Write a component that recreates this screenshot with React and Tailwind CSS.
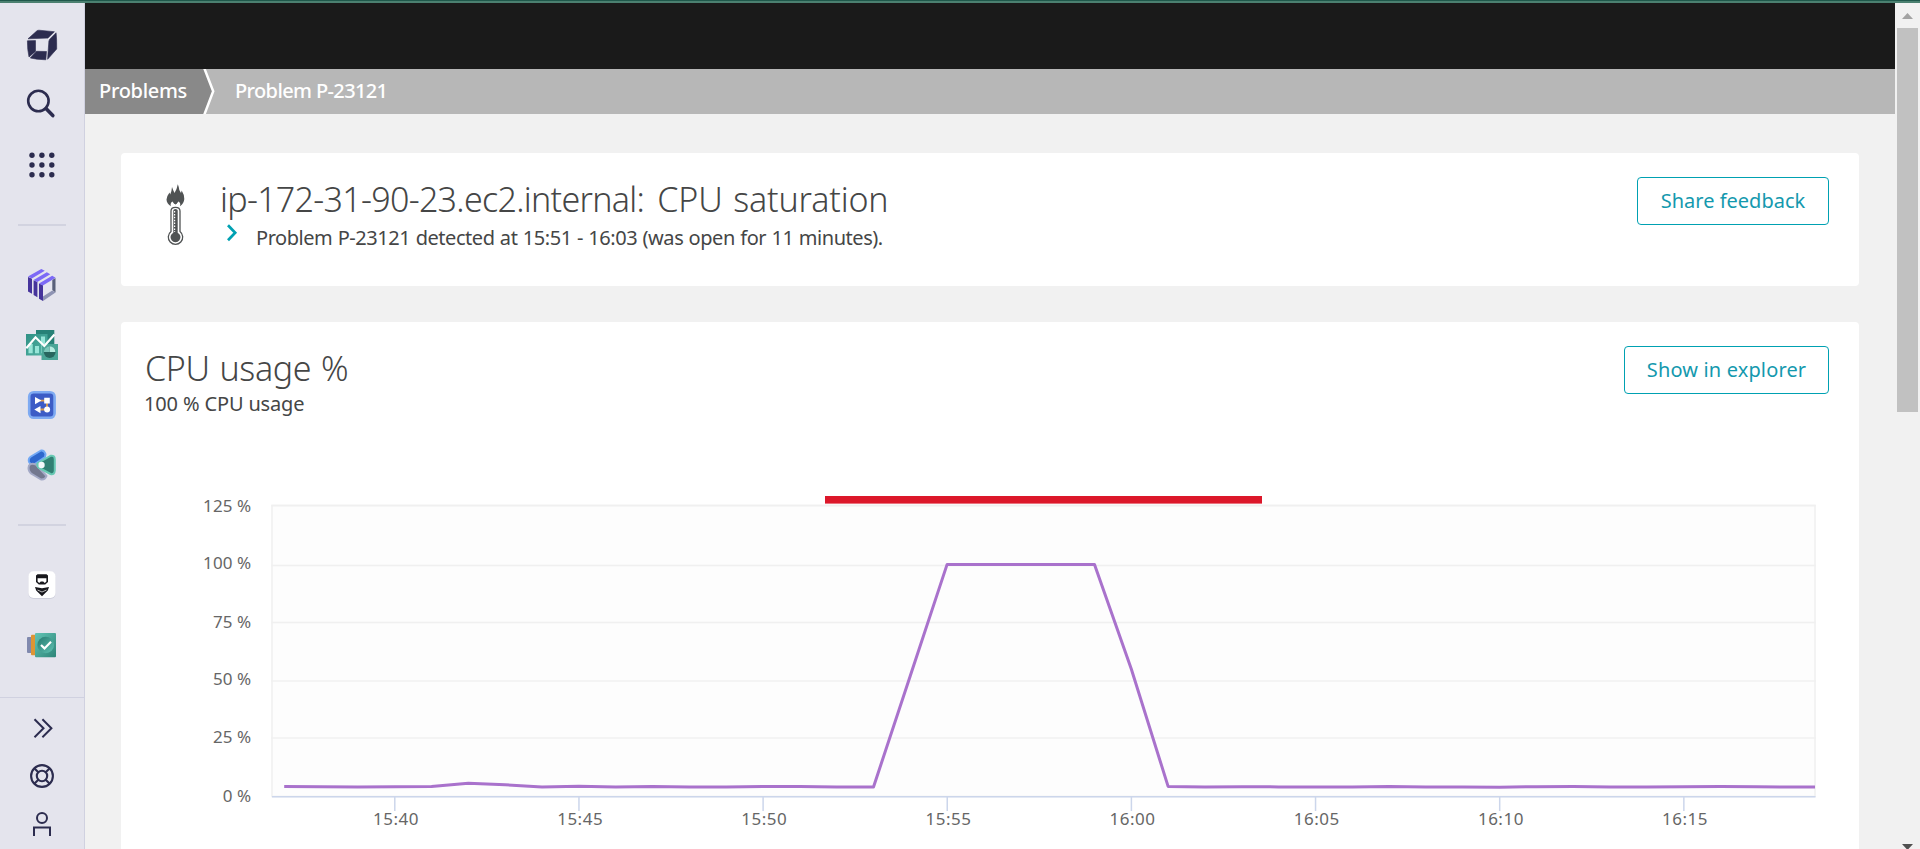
import React from "react";

const INK = "#2c2c4f";

function Glyph({ y, h = 60, label, children }) {
  return (
    <svg className="block w-[60px] shrink-0" height={h} viewBox={`12 ${y} 60 ${h}`} fill="none" aria-label={label}>
      {children}
    </svg>
  );
}

function Logo() {
  return (
    <Glyph y={15} label="Home">
      <g fill={INK} stroke={INK} strokeWidth="0.6" strokeLinejoin="round">
        <path d="M28 38.8 37.2 30.6Q38 30.2 39 30.2L54.4 31.7 48 38.1Z" />
        <path d="M49.7 39.2 56.1 32.8Q56.8 39 56.7 49L47.6 59.3Q48.2 50 48.9 41Z" />
        <path d="M27.4 40.8 35.5 40.6 35.5 51.4 29 57Q27.3 50 27.4 40.8Z" />
        <path d="M30.3 58 36.4 51.3 46.5 51.5 45.8 59.8 37 59.2Z" />
      </g>
    </Glyph>
  );
}

function Search() {
  return (
    <Glyph y={75} label="Search">
      <circle cx="38.4" cy="101" r="10.2" stroke={INK} strokeWidth="2.6" />
      <path d="M46 108.6 52.8 115.6" stroke={INK} strokeWidth="3.6" strokeLinecap="round" />
    </Glyph>
  );
}

function Apps() {
  return (
    <Glyph y={135} label="Apps">
      {[155.2, 165, 174.8].map((cy) => [32, 41.9, 51.8].map((cx) => <circle key={`${cx}-${cy}`} cx={cx} cy={cy} r="2.7" fill={INK} />))}
    </Glyph>
  );
}

function Panels() {
  return (
    <Glyph y={255} label="Clouds">
      <path d="M43 286 52.5 281V290.5L43 295.5Z" fill="#e6e6f0" />
      <path d="M52.3 280 55.5 278V292.5L52.3 290Z" fill="#59607a" />
      <path d="M43 301V296.5L52.3 290.5 55.5 292.5Z" fill="#8e93b3" />
      <path d="M28 277 32 278.8V293.8L28 291.5ZM33.6 280.2 37.4 282V297.2L33.6 295ZM39 283.5 43 285.2V301L39 298.8Z" fill="#46349c" />
      <path d="M28 276.6 41.3 269 44.8 270.8 31.8 278.6ZM33.6 280 46.8 272.3 50.3 274.2 37.3 281.9ZM39 283.4 52.2 275.8 55.6 277.7 42.8 285.4Z" fill="#7c69f6" />
    </Glyph>
  );
}

function Dashboards() {
  return (
    <Glyph y={315} label="Dashboards">
      <defs>
        <linearGradient id="dashA" x1="0" y1="0" x2="1" y2="1">
          <stop stopColor="#2f9085" />
          <stop offset="1" stopColor="#55b5a6" />
        </linearGradient>
      </defs>
      <rect x="36" y="330" width="18.3" height="18" fill="#278177" />
      <rect x="26" y="334" width="21.5" height="21.5" fill="url(#dashA)" />
      <path d="M28.5 344h4.2v9.3h-4.2ZM35 346h4v7.3h-4ZM41 336.5h4v16.8h-4Z" fill="#97e5d8" />
      <rect x="41.5" y="344" width="16.5" height="16" fill="#4aa597" />
      <circle cx="49.7" cy="352.2" r="5.8" fill="#27665f" />
      <path d="M49.5 352V346.2A5.8 5.8 0 0 1 55.4 352Z" fill="#b5ece1" />
      <path d="M49.5 352H43.9A5.8 5.8 0 0 1 49.5 346.2Z" fill="#7cc8bb" />
      <path d="M26.3 348.3 35.5 337.3 44.3 346 54.5 334.5" stroke="#fff" strokeWidth="2.2" />
    </Glyph>
  );
}

function Workflows() {
  return (
    <Glyph y={375} label="Workflows">
      <rect x="29.2" y="392.2" width="25.4" height="25.6" rx="4.5" fill="#3c5cc6" stroke="#7eaaf2" strokeWidth="2.6" />
      <path d="M40 400.6H47V409.5H39" stroke="#d99b49" strokeWidth="1.8" />
      <path d="M35 397V404.2L41.5 400.6ZM44.2 397.8H49.8V403.4H44.2ZM34.3 409.6 40.5 406V413.2Z" fill="#fff" />
      <circle cx="47.1" cy="409.6" r="3" fill="#fff" />
    </Glyph>
  );
}

function Discover() {
  return (
    <Glyph y={435} label="Discovery">
      <g strokeLinejoin="round" strokeWidth="2">
        <path d="M29 462Q28 458.500 31 456.500L41 450.500Q44 449.800 45.500 454L45 457 34 464.500Q30 464.500 29 462Z" fill="#2e67cd" stroke="#71a8f5" />
        <path d="M29 465.500Q27.500 470 31 473.500L41 479.500Q45 480 46.500 476L36 464.500Q31 462.800 29 465.500Z" fill="#73788f" stroke="#a3a9c6" />
        <path d="M38 463 50.500 455.800Q54.800 455 54.800 459.500V470.500Q54.500 475 50.500 474L38.500 467.500Q36.200 465 38 463Z" fill="#317f73" stroke="#68c9b4" />
      </g>
      <circle cx="41.5" cy="465" r="3.2" fill="#f3f8fb" />
    </Glyph>
  );
}

function Ninja() {
  return (
    <Glyph y={555} label="Ninja">
      <rect x="28.5" y="572" width="27" height="27" rx="5" fill="#cfd0dc" />
      <rect x="28.5" y="571.3" width="27" height="26.7" rx="5" fill="#fff" />
      <path d="M37.5 574.3H46.5L48 575.5V582L45.2 584.6H38.8L36 582V575.5Z" fill="#17171c" />
      <path d="M37.6 578.3H46.4V581.5L44.8 582.9 43.2 581.5H40.8L39.2 582.9 37.6 581.5Z" fill="#fff" />
      <path d="M35 587 42 588.2 49 587 47.8 590.5 42 596.3 36.2 590.5Z" fill="#17171c" />
      <path d="M37.5 590 42 592 46.5 590" stroke="#fff" strokeWidth="0.7" />
    </Glyph>
  );
}

function Guardian() {
  return (
    <Glyph y={615} label="Guardian">
      <defs>
        <linearGradient id="gA" x1="0" y1="0" x2="1" y2="1">
          <stop stopColor="#62c4b5" />
          <stop offset="1" stopColor="#2d8578" />
        </linearGradient>
        <linearGradient id="gB" x1="0" y1="0" x2="1" y2="1">
          <stop stopColor="#267a70" />
          <stop offset="1" stopColor="#5fc2b2" />
        </linearGradient>
      </defs>
      <rect x="27" y="637" width="6" height="16" rx="1" fill="#8089ae" />
      <rect x="31" y="634.7" width="6" height="20.5" rx="1" fill="#dd9534" />
      <rect x="35" y="633" width="21" height="24.3" rx="1" fill="url(#gA)" />
      <circle cx="45.7" cy="645" r="8.3" fill="url(#gB)" />
      <path d="M41 645 44.5 648.4 51 641.8" stroke="#fff" strokeWidth="2.2" />
    </Glyph>
  );
}

function Footer() {
  return (
    <>
      <Glyph y={704} h={48} label="Expand">
        <path d="M34.5 719.2 43.5 728.2 34.5 737.2M42.4 719.2 51.4 728.2 42.4 737.2" stroke={INK} strokeWidth="2" />
      </Glyph>
      <Glyph y={752} h={48} label="Help">
        <g stroke={INK} strokeWidth="2.1">
          <circle cx="42" cy="776" r="10.9" />
          <circle cx="42" cy="776" r="5.2" />
          <path d="M34.3 768.3 38.3 772.3M49.7 768.3 45.7 772.3M34.3 783.7 38.3 779.7M49.7 783.7 45.7 779.7" />
        </g>
      </Glyph>
      <Glyph y={800} h={48} label="Account">
        <g stroke={INK} strokeWidth="2">
          <circle cx="42" cy="818" r="5" />
          <path d="M34 836V827.5H50V836" />
        </g>
      </Glyph>
    </>
  );
}

function Sidebar() {
  return (
    <nav className="flex w-[85px] shrink-0 flex-col items-center border-r border-[#d0d1e0] bg-[#e4e4ed] pt-3">
      <Logo />
      <Search />
      <Apps />
      <div className="my-[29px] h-0.5 w-12 shrink-0 bg-[#d2d3e0]" />
      <Panels />
      <Dashboards />
      <Workflows />
      <Discover />
      <div className="my-[29px] h-0.5 w-12 shrink-0 bg-[#d2d3e0]" />
      <Ninja />
      <Guardian />
      <div className="mt-[22px] flex w-full flex-col items-center border-t border-[#d0d1e0] pt-1.5">
        <Footer />
      </div>
    </nav>
  );
}

function Breadcrumbs() {
  return (
    <div className="flex h-[45px] shrink-0 items-center bg-[#b7b7b7] text-xl font-medium text-white">
      <div className="flex h-full w-[118px] items-center bg-[#898989] pb-0.5 pl-3.5 tracking-[-0.3px]">Problems</div>
      <svg className="block h-[45px] w-3" viewBox="0 0 12 45" fill="none">
        <path d="M0 0H1.5L10 22.5 1.5 45H0Z" fill="#898989" />
        <path d="M1.2 -1 10.2 22.3 1.2 46" stroke="#fff" strokeWidth="2.5" />
      </svg>
      <div className="pb-0.5 pl-5 tracking-[-0.62px]">Problem P-23121</div>
    </div>
  );
}

function Thermometer() {
  return (
    <svg className="block h-[64px] w-[20px]" viewBox="165 183 20 64" fill="none">
      <path d="M172 187Q173 190 174.5 193Q177 189 177.8 184.2Q179 187 179.3 190L181 193 181.7 190.5Q184.500 195 184.3 199Q184 203.5 180 206.2Q181 202.5 178.3 201.5Q176.5 204.2 175.3 204.2Q174 204 172.5 201.5Q170 203 170.8 206.2Q166.7 203.5 166.5 199.5Q166.5 196.5 169.5 192.5L170.2 194.5Q171.8 191 172 187Z" fill="#505354" />
      <path d="M173.2 198.5H178Q178.8 202 175.6 204.5Q172.5 202 173.2 198.5Z" fill="#505354" />
      <path d="M171 211Q171 207.3 175.5 207.3Q180 207.3 180 211V231.5A7.2 7.2 0 1 1 171 231.5Z" stroke="#505354" strokeWidth="1.3" />
      <path d="M173.3 210.5Q173.3 209 175.5 209Q177.7 209 177.7 210.5V232.7A5 5 0 1 1 173.3 232.7Z" fill="#505354" />
      <path d="M174.6 211V232" stroke="#fff" strokeWidth="1.2" strokeDasharray="1.5 1.4" />
    </svg>
  );
}

function OutlineButton({ className, children }) {
  return (
    <button className={`flex h-12 shrink-0 items-center justify-center rounded-[4px] border border-[#00a1b2] bg-white text-xl text-[#1499ae] ${className}`}>
      {children}
    </button>
  );
}

function ProblemCard() {
  return (
    <section className="flex h-[133px] shrink-0 items-start rounded-[4px] bg-white pl-11 pr-[30px]">
      <div className="pt-[30px]">
        <Thermometer />
      </div>
      <div className="ml-[33px] flex-1 pt-[26px]">
        <h1 className="pl-0.5 text-[34px] font-light leading-10 tracking-[-0.7px] whitespace-nowrap">
          ip-172-31-90-23.ec2.internal:{" "}
          <span className="pl-[5px] tracking-[-0.15px] [word-spacing:2px]">CPU saturation</span>
        </h1>
        <div className="flex pt-[7px]">
          <svg className="-mt-[5px] block h-6 w-[38px]" viewBox="0 0 38 24" fill="none">
            <path d="M10 4.2 17.2 11.8 10 19.3" stroke="#00a1b2" strokeWidth="2.7" />
          </svg>
          <p className="text-xl leading-6 tracking-[-0.45px] whitespace-nowrap [word-spacing:0.6px]">
            Problem P-23121 detected at 15:51 - 16:03 (was open for 11 minutes).
          </p>
        </div>
      </div>
      <OutlineButton className="mt-6 w-[192px]">Share feedback</OutlineButton>
    </section>
  );
}

const START = 284.2;
const STEP = 36.83;
const levels = [786.6, 786.8, 786.9, 786.8, 786.4, 783.3, 784.8, 787.1, 786.2, 787, 786.5, 786.9, 786.9, 786.6, 786.6, 786.9, 787, 675.7, 564.4, 564.4, 564.4, 564.4, 564.4, 669, 786.4, 787, 786.7, 786.9, 786.9, 786.9, 786.4, 786.9, 786.9, 787.2, 786.7, 786.4, 786.9, 787, 786.8, 786.5, 786.8, 787, 786.9];
const points = levels.map((y, i) => `${Math.min(START + i * STEP, 1815).toFixed(1)},${y}`).join(" ");
const rows = [
  ["125 %", 505.5, 511.8],
  ["100 %", 565.5, 568.8],
  ["75 %", 622.5, 628],
  ["50 %", 681, 685],
  ["25 %", 738, 743],
  ["0 %", 0, 802],
];
const times = ["15:40", "15:45", "15:50", "15:55", "16:00", "16:05", "16:10", "16:15"];

function CpuChart() {
  return (
    <svg className="block h-[369px] w-full" viewBox="121 480 1738 369">
      <rect x="272" y="505.5" width="1543" height="291" fill="#fdfdfd" stroke="#f0f0f0" strokeWidth="1.6" />
      {rows.map(([label, y, base]) => (
        <g key={label}>
          {y > 0 && <line x1="271.5" x2="1815.5" y1={y} y2={y} stroke="#f0f0f0" strokeWidth="1.6" />}
          <text x="251.3" y={base} textAnchor="end" fontSize="17" letterSpacing="0.1" fill="#666">{label}</text>
        </g>
      ))}
      <line x1="272" x2="1815.5" y1="796.7" y2="796.7" stroke="#ccd6eb" strokeWidth="1.6" />
      {times.map((t, i) => (
        <g key={t}>
          <line x1={394.8 + i * 184.15} x2={394.8 + i * 184.15} y1="797" y2="811" stroke="#ccd6eb" strokeWidth="1.5" />
          <text x={396 + i * 184.15} y="824.8" textAnchor="middle" fontSize="17" letterSpacing="0.5" fill="#666">{t}</text>
        </g>
      ))}
      <rect x="825" y="496" width="437" height="7.6" fill="#dc172a" />
      <polyline points={points} fill="none" stroke="#a972cc" strokeWidth="3" strokeLinejoin="round" />
    </svg>
  );
}

function UsageCard() {
  return (
    <section className="flex h-[527px] shrink-0 flex-col rounded-t-[4px] bg-white">
      <div className="flex h-[158px] shrink-0 items-start justify-between pl-6 pr-[30px]">
        <div className="pt-[26px]">
          <h2 className="text-[34px] font-light leading-10 tracking-[-0.4px] [word-spacing:1.5px]">CPU usage %</h2>
          <p className="-ml-px pt-1 text-xl leading-6 tracking-[-0.15px]">100 % CPU usage</p>
        </div>
        <OutlineButton className="mt-6 w-[205px] tracking-[0.15px]">Show in explorer</OutlineButton>
      </div>
      <CpuChart />
    </section>
  );
}

function Scrollbar() {
  return (
    <div className="flex w-[25px] shrink-0 flex-col items-center justify-between bg-[#f1f1f1]">
      <div className="flex flex-col items-center">
        <svg className="block h-[25px] w-[25px]" viewBox="0 0 25 25">
          <path d="M7 16 12.5 10 18 16Z" fill="#a3a3a3" />
        </svg>
        <div className="h-[384px] w-[21px] bg-[#c1c1c1]" />
      </div>
      <svg className="block h-[5px] w-[25px]" viewBox="0 0 25 5">
        <path d="M7 0H18L12.5 6Z" fill="#505050" />
      </svg>
    </div>
  );
}

export default function App() {
  return (
    <div className="flex h-[849px] w-[1920px] flex-col overflow-hidden bg-[#f1f1f1] font-['Noto_Sans',sans-serif] text-[#454646]">
      <div className="h-[3px] shrink-0 border-t border-[#1f584b] bg-[#4b8070]" />
      <div className="flex h-[846px] shrink-0">
        <Sidebar />
        <main className="flex min-w-0 flex-1 flex-col overflow-hidden">
          <header className="h-[66px] shrink-0 bg-[#1a1a1a]" />
          <Breadcrumbs />
          <div className="flex flex-col gap-9 pl-9 pr-9 pt-[39px]">
            <ProblemCard />
            <UsageCard />
          </div>
        </main>
        <Scrollbar />
      </div>
    </div>
  );
}
